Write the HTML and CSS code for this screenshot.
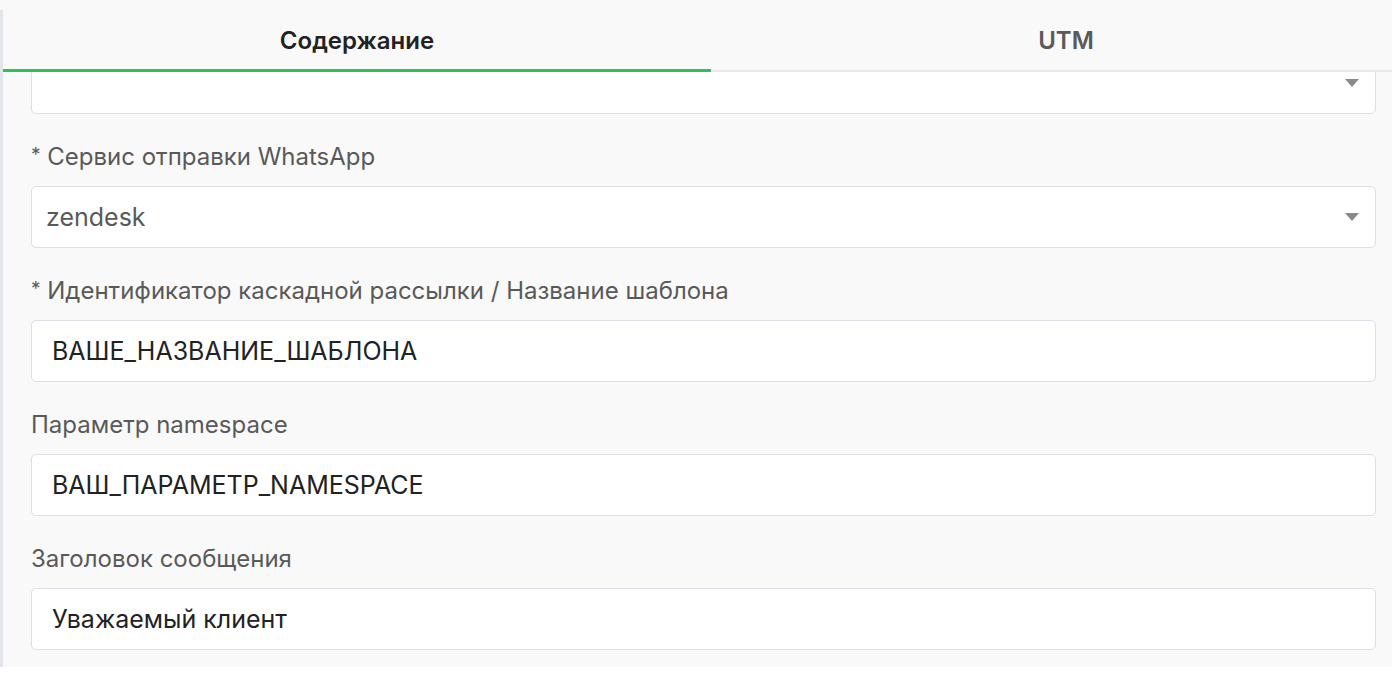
FILE: index.html
```html
<!DOCTYPE html>
<html lang="ru">
  <head>
    <meta charset="UTF-8" />
    <meta name="viewport" content="width=device-width, initial-scale=1.0" />
    <title>Содержание</title>
    <link rel="stylesheet" href="styles.css">
  </head>
  <body>
    <div class="panel">
      <div class="edge"></div>
      <div class="main">
        <div class="tabs">
          <div class="tab active">Содержание</div>
          <div class="tab">UTM</div>
        </div>

        <div class="scroll">
          <form class="form">
            <div class="field">
              <div class="control select"><span class="value"></span><span class="arrow"></span></div>
            </div>

            <div class="field">
              <label class="label"><span class="req">*</span> Сервис отправки WhatsApp</label>
              <div class="control select"><span class="value">zendesk</span><span class="arrow"></span></div>
            </div>

            <div class="field">
              <label class="label"><span class="req">*</span> Идентификатор каскадной рассылки / Название шаблона</label>
              <div class="control input">ВАШЕ_НАЗВАНИЕ_ШАБЛОНА</div>
            </div>

            <div class="field">
              <label class="label">Параметр namespace</label>
              <div class="control input">ВАШ_ПАРАМЕТР_NAMESPACE</div>
            </div>

            <div class="field">
              <label class="label">Заголовок сообщения</label>
              <div class="control input">Уважаемый клиент</div>
            </div>
          </form>
        </div>
      </div>
    </div>
  </body>
</html>
```

FILE: styles.css
```css
body {
  margin: 0;
  background: #ffffff;
  font-family: Inter, "Noto Sans", sans-serif;
}

.panel {
  width: 1392px;
  height: 667px;
  background: #f9f9f9;
  display: flex;
}
.edge {
  width: 3px;
  margin-top: 10px;
  background: #e2e5e9;
}
.main {
  flex: 1;
  display: flex;
  flex-direction: column;
  overflow: hidden;
}

/* tabs */
.tabs {
  height: 70px;
  display: flex;
  border-bottom: 2px solid #e9e9e9;
  flex-shrink: 0;
}
.tab {
  flex: 0 0 auto;
  width: 710px;
  display: flex;
  align-items: center;
  justify-content: center;
  font-size: 24px;
  font-weight: 600;
  color: #5a5a5a;
  padding-top: 11px;
  box-sizing: border-box;
}
.tab.active {
  width: 708px;
  color: #222222;
  border-bottom: 3px solid #2fbf5b;
  margin-bottom: -2px;
}

/* form */
.scroll {
  flex: 1;
  overflow: hidden;
  padding: 0 16px 0 28px;
}
.form {
  margin: -20px 0 0;
}
.field {
  margin-bottom: 28px;
}
.label {
  display: block;
  font-size: 24px;
  line-height: 30px;
  color: #595959;
  margin-bottom: 14px;
}
.req {
  font-size: 19px;
  line-height: 0;
  position: relative;
  top: -4px;
}
.control {
  height: 62px;
  box-sizing: border-box;
  background: #ffffff;
  border: 1px solid #dcdfe5;
  border-radius: 5px;
  display: flex;
  align-items: center;
  font-size: 25px;
}
.select {
  padding: 0 16px 0 14px;
  color: #595959;
}
.select .value {
  flex: 1;
}
.arrow {
  width: 0;
  height: 0;
  border-left: 7px solid transparent;
  border-right: 7px solid transparent;
  border-top: 8px solid #8a8a8a;
}
.input {
  padding: 0 20px;
  color: #222222;
}
```
